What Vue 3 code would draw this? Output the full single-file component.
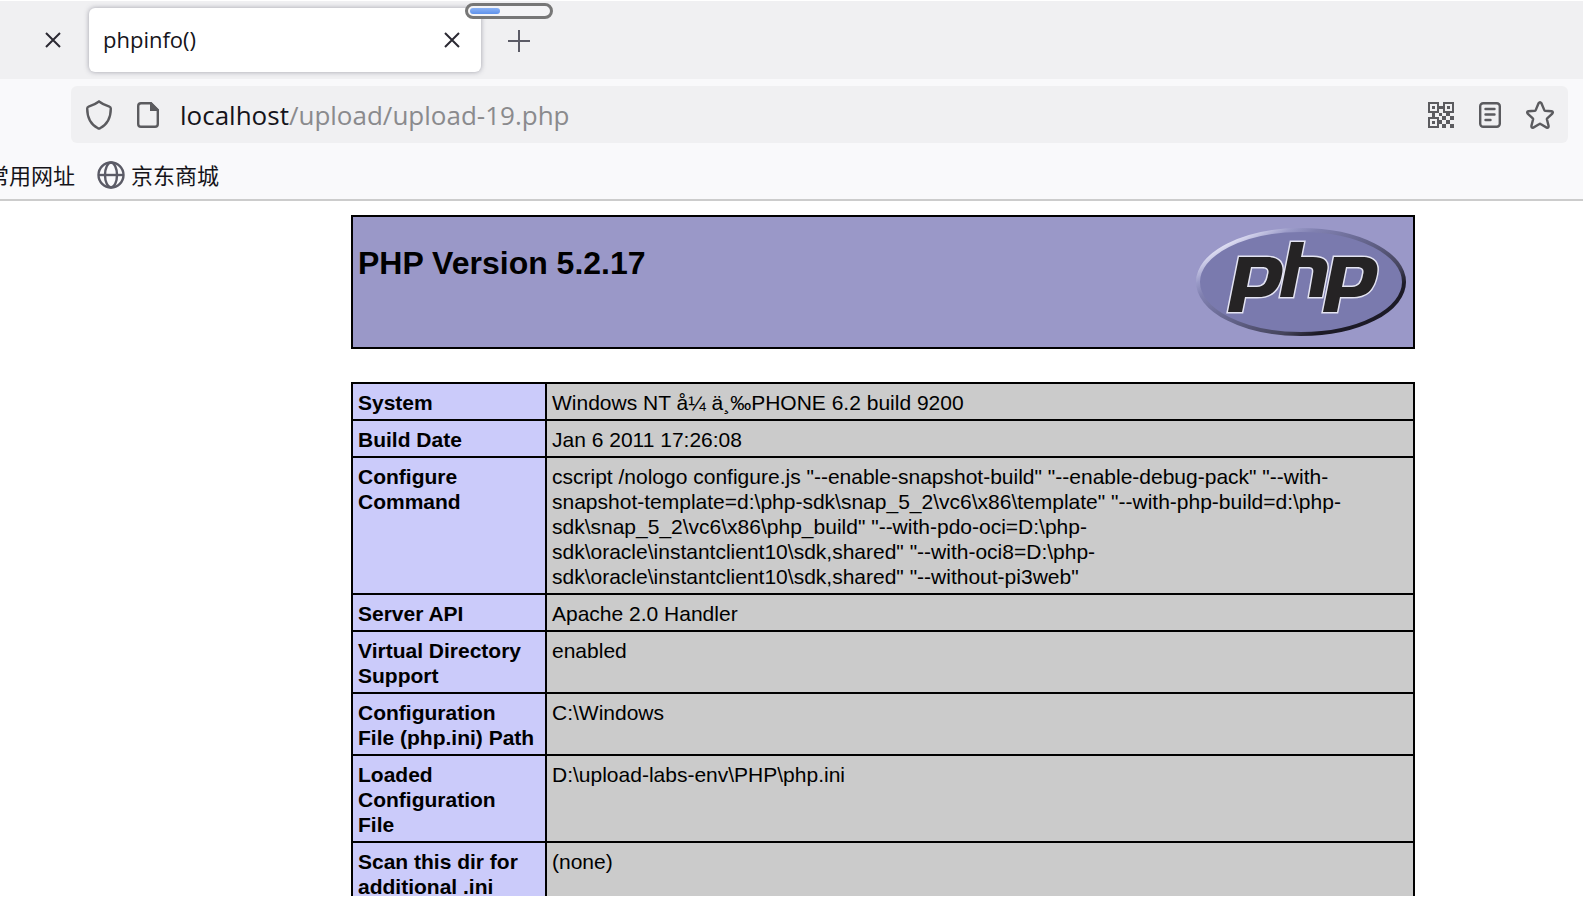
<script setup>
const rows = [
  ['System', 'Windows NT å¼ ä¸‰PHONE 6.2 build 9200'],
  ['Build Date', 'Jan 6 2011 17:26:08'],
  ['Configure Command', 'cscript /nologo configure.js "--enable-snapshot-build" "--enable-debug-pack" "--with-snapshot-template=d:\\php-sdk\\snap_5_2\\vc6\\x86\\template" "--with-php-build=d:\\php-sdk\\snap_5_2\\vc6\\x86\\php_build" "--with-pdo-oci=D:\\php-sdk\\oracle\\instantclient10\\sdk,shared" "--with-oci8=D:\\php-sdk\\oracle\\instantclient10\\sdk,shared" "--without-pi3web"'],
  ['Server API', 'Apache 2.0 Handler'],
  ['Virtual Directory Support', 'enabled'],
  ['Configuration File (php.ini) Path', 'C:\\Windows'],
  ['Loaded Configuration File', 'D:\\upload-labs-env\\PHP\\php.ini'],
  ['Scan this dir for additional .ini', '(none)'],
]
</script>

<template>
  <div class="browser">
    <header>
      <div class="tabs">
        <button class="icon-btn" aria-label="Close previous tab">
          <svg width="16" height="16" viewBox="0 0 16 16"><path d="M1 1L15 15M15 1L1 15" /></svg>
        </button>
        <div class="tab">
          <span>phpinfo()</span>
          <button class="icon-btn" aria-label="Close tab">
            <svg width="16" height="16" viewBox="0 0 16 16"><path d="M1 1L15 15M15 1L1 15" /></svg>
          </button>
        </div>
        <button class="icon-btn new-tab" aria-label="New tab">
          <svg width="22" height="22" viewBox="0 0 22 22"><path d="M11 0V22M0 11H22" /></svg>
        </button>
        <div class="meter"><i></i></div>
      </div>
      <div class="nav">
        <div class="urlbar">
          <button class="icon-btn" aria-label="Tracking protection">
            <svg width="26" height="30" viewBox="0 0 26 30"><path class="thick" d="M13 1.5C10.500 3.500 6 5.500 2.600 6.600Q1.200 7.100 1.200 8.600C1.200 18.500 4.500 24.500 12 28.300Q13 28.700 14 28.300C21.500 24.500 24.800 18.500 24.800 8.600Q24.800 7.100 23.400 6.600C20 5.500 15.500 3.500 13 1.500Z" /></svg>
          </button>
          <button class="icon-btn" aria-label="Site information">
            <svg width="22" height="26" viewBox="0 0 22 26"><path class="thick" d="M14 1.200H4Q1.200 1.200 1.200 4V22Q1.200 24.800 4 24.800H18Q20.800 24.800 20.800 22V8Z" /><path class="solid" d="M13 0V9H22V8L14 0Z" /></svg>
          </button>
          <div class="address"><b>localhost</b>/upload/upload-19.php</div>
          <button class="icon-btn" aria-label="QR code">
            <svg width="26" height="26" viewBox="0 0 26 26">
              <path d="M1 1H10V10H1ZM16 1H25V10H16ZM1 16H10V25H1Z" />
              <path class="solid" d="M4 4h3v3h-3zM19 4h3v3h-3zM4 19h3v3h-3zM10 4h6v3h-6zM4 10h3v6h-3zM11 11h3v3h-3zM18 11h4v3h-4zM14 14h4v4h-4zM22 14h4v4h-4zM10 18h4v4h-4zM18 18h4v4h-4zM14 22h4v4h-4zM22 22h4v4h-4z" />
            </svg>
          </button>
          <button class="icon-btn" aria-label="Reader view">
            <svg width="22" height="26" viewBox="0 0 22 26"><rect class="thick" x="1.200" y="1.200" width="19.600" height="23.600" rx="3" /><path class="thick round" d="M6.500 7H15.500M6.500 12.500H15.500M6.500 18H11.500" /></svg>
          </button>
          <button class="icon-btn" aria-label="Bookmark this page">
            <svg width="28" height="28" viewBox="0 0 28 28"><path class="thick" d="M12.600 2.200Q14 .2 15.400 2.200L18.300 9.100Q18.500 9.600 19.100 9.700L25.500 10.200Q27.700 10.700 26.300 12.600L21.200 17.300Q20.800 17.700 20.900 18.300L22.600 25Q22.700 27.200 20.600 26.600L14.600 23Q14 22.600 13.400 23L7.400 26.600Q5.300 27.200 5.400 25L7.100 18.300Q7.200 17.700 6.800 17.300L1.700 12.600Q.3 10.700 2.500 10.200L8.900 9.700Q9.500 9.600 9.700 9.100Z" /></svg>
          </button>
        </div>
      </div>
      <nav class="bookmarks">
        <a href="#" class="cut">常用网址</a>
        <a href="#">
          <svg width="28" height="28" viewBox="0 0 28 28"><circle class="thick" cx="14" cy="14" r="12.500" /><ellipse class="thick" cx="14" cy="14" rx="6" ry="12.500" /><path class="thick" d="M1.500 14H26.500" /></svg>
          京东商城
        </a>
      </nav>
    </header>
    <main>
      <section class="banner">
        <h1>PHP Version 5.2.17</h1>
        <svg class="logo" width="212" height="112" viewBox="0 0 212 112" role="img" aria-label="PHP logo">
          <defs>
            <linearGradient id="rim" x1=".1" y1="-.1" x2="1" y2=".7">
              <stop offset=".15" stop-color="#e0e0f4" />
              <stop offset=".27" stop-color="#9a9ac8" />
              <stop offset=".35" stop-color="#8080b0" />
              <stop offset=".55" stop-color="#66668e" />
              <stop offset=".8" stop-color="#45445c" />
              <stop offset=".9" stop-color="#1c1a26" />
            </linearGradient>
          </defs>
          <ellipse cx="106" cy="56" rx="103" ry="52" />
          <g class="word">
            <path d="M44 31H72C85 31 89 38 87 48C84 65 76 71 62 71H50L47 86H33ZM56 41L52 61H62C69 61 72 56 73 49C75 43 72 41 67 41Z" />
            <path d="M96 16H109L106 31H118C130 31 134 36 132 45L127 71H114L118 48C119 43 118 41 113 41H104L98 71H85Z" />
            <path d="M139 31H167C180 31 184 38 182 48C179 65 171 71 157 71H145L142 86H128ZM151 41L147 61H157C164 61 167 56 168 49C170 43 167 41 162 41Z" />
          </g>
        </svg>
      </section>
      <table>
        <tbody>
          <tr v-for="row in rows" :key="row[0]">
            <th scope="row">{{ row[0] }}</th>
            <td>{{ row[1] }}</td>
          </tr>
        </tbody>
      </table>
    </main>
  </div>
</template>

<style>
body { margin: 0; background: #fff; }
</style>

<style scoped>
.browser { height: calc(100vh - 3px); overflow: hidden; font-family: "Open Sans", "Noto Sans CJK SC", sans-serif; color: #15141a; }
header { background: #f9f9fb; border-bottom: 2px solid #ccc; }
.icon-btn { border: 0; padding: 0; background: none; display: flex; flex: none; color: #5b5b66; }
svg path, svg circle, svg ellipse, svg rect { fill: none; stroke: currentColor; stroke-width: 2; }
svg .thick { stroke-width: 2.4; }
svg .round { stroke-linecap: round; }
svg .solid { fill: currentColor; stroke: none; }
.tabs { position: relative; box-sizing: border-box; height: 79px; background: #f0f0f2; border-top: 1px solid #fff; display: flex; align-items: center; padding-left: 45px; }
.tabs .icon-btn { color: #2b2a33; }
.tab { box-sizing: border-box; width: 392px; height: 64px; margin: 0 27px 0 28px; padding: 0 21px 0 14px; background: #fff; border-radius: 6px; box-shadow: 0 0 5px rgba(80, 80, 100, .5); display: flex; align-items: center; justify-content: space-between; font-size: 22px; line-height: 30px; }
.tab span { padding-bottom: 2px; }
.tabs .new-tab { color: #5b5b66; padding-top: 2px; }
.meter { position: absolute; left: 465px; top: 2px; width: 82px; height: 10px; border: 3px solid #777; border-radius: 8px; background: #f4f4f6; display: flex; align-items: center; }
.meter i { width: 30px; height: 6px; margin-left: 2px; border-radius: 3px; background: linear-gradient(#8ab2f6, #5f92ea); }
.nav { padding: 7px 15px 0 71px; }
.urlbar { height: 57px; padding: 0 14px 0 15px; background: #f0f0f2; border-radius: 6px; display: flex; align-items: center; gap: 25px; }
.urlbar .icon-btn { color: #5b5b5f; }
.address { flex: 1; margin-left: -4px; font-size: 26px; color: #8a8a8d; white-space: nowrap; }
.address b { font-weight: 400; color: #15141a; }
.bookmarks { box-sizing: border-box; height: 56px; padding-top: 8px; display: flex; align-items: center; gap: 22px; line-height: 32px; }
.bookmarks a { display: flex; align-items: center; gap: 6px; color: #15141a; text-decoration: none; font-size: 22px; white-space: nowrap; }
.bookmarks .cut { margin-left: -13px; }
.bookmarks svg { color: #5b5b66; }
main { padding: 14px 168px 0 351px; font-family: "Liberation Sans", Arial, sans-serif; color: #000; }
.banner { box-sizing: border-box; height: 134px; padding: 9px 6px 0 5px; border: 2px solid #000; background: #9a98c8; display: flex; align-items: flex-start; justify-content: space-between; }
h1 { margin: 18px 0 0; font-size: 32px; line-height: 38px; }
.word path { fill: #252324; stroke: #e4e4f2; stroke-width: 3; paint-order: stroke; }
.logo ellipse { stroke: url(#rim); fill: #7a7aae; stroke-width: 4; }
table { width: 100%; margin-top: 33px; border-collapse: collapse; font-size: 21px; line-height: 25px; }
th, td { border: 2px solid #000; padding: 6px 5px 4px; vertical-align: top; text-align: left; }
th { width: 178px; padding-right: 9px; background: #cbcbfa; }
td { background: #cbcbcb; }
tr:last-child td { height: 75px; }
</style>
